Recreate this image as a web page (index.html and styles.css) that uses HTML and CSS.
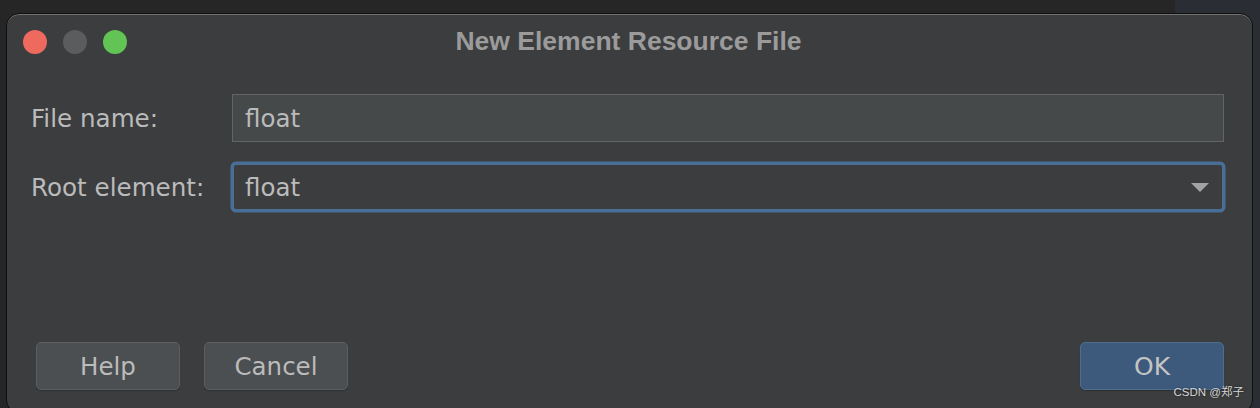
FILE: index.html
```html
<!DOCTYPE html>
<html>
<head>
<meta charset="utf-8">
<link rel="stylesheet" href="styles.css">
</head>
<body>
<div class="window">
  <div class="titlebar">
    <div class="lights">
      <span class="light red"></span>
      <span class="light gray"></span>
      <span class="light green"></span>
    </div>
    <div class="title">New Element Resource File</div>
  </div>
  <div class="form">
    <label class="label">File name:</label>
    <div class="field">float</div>
    <label class="label">Root element:</label>
    <div class="combo">
      <span>float</span>
      <svg class="arrow" width="18" height="10" viewBox="0 0 18 10"><path d="M0 0 H18 L9 9 Z" fill="#a3a3a3"/></svg>
    </div>
  </div>
  <div class="buttons">
    <button class="btn">Help</button>
    <button class="btn">Cancel</button>
    <span class="spacer"></span>
    <button class="btn primary">OK</button>
  </div>
</div>
<div class="watermark">CSDN @郑子</div>
</body>
</html>
```
FILE: styles.css
```css
html, body {
  margin: 0;
  padding: 0;
}
body {
  width: 1260px;
  height: 408px;
  overflow: hidden;
  background: linear-gradient(to right, #262626 1175px, #2b2d34 1175px);
  font-family: "DejaVu Sans", "Noto Sans", sans-serif;
  position: relative;
}
.window {
  margin: 13px 0 0 6px;
  width: 1247px;
  height: 400px;
  box-sizing: border-box;
  background: #3c3d3f;
  border: 1px solid #0f0f0f;
  border-radius: 13px;
  box-shadow: inset 0 1px 0 #717171;
  display: flex;
  flex-direction: column;
}
.titlebar {
  height: 56px;
  flex: none;
  position: relative;
  display: flex;
  align-items: center;
  justify-content: center;
}
.lights {
  position: absolute;
  left: 16px;
  top: 16px;
  display: flex;
  gap: 16px;
}
.light {
  width: 24px;
  height: 24px;
  border-radius: 50%;
  display: block;
}
.red { background: #ee6a5f; }
.gray { background: #5b5c5e; }
.green { background: #61c454; }
.title {
  font-family: "Liberation Sans", Arial, sans-serif;
  font-weight: bold;
  font-size: 26.5px;
  color: #9b9b9b;
  margin-left: -2px;
  margin-top: -1px;
}
.form {
  margin-top: 24px;
  padding: 0 28px 0 24px;
  display: grid;
  grid-template-columns: 201px 1fr;
  row-gap: 21px;
  align-items: center;
}
.label {
  font-size: 24.6px;
  color: #bbbbbb;
  margin-top: 1px;
}
.field, .combo {
  height: 48px;
  box-sizing: border-box;
  display: flex;
  align-items: center;
  padding-left: 12px;
  font-size: 24.5px;
  color: #bbbbbb;
}
.field {
  background: #45494a;
  border: 1px solid #626465;
}
.combo {
  background: #3c3d3f;
  border: 2px solid #4a6f97;
  box-shadow: 0 0 0 1.5px #4a6f97;
  border-radius: 4px;
  justify-content: space-between;
  padding-left: 11px;
  padding-right: 13px;
}
.arrow {
  display: block;
  margin-top: 1px;
}
.buttons {
  margin-top: auto;
  margin-bottom: 22px;
  padding: 0 28px 0 29px;
  display: flex;
  gap: 24px;
  align-items: center;
}
.spacer { flex: 1; }
.btn {
  width: 144px;
  height: 48px;
  box-sizing: border-box;
  background: #4b4f51;
  border: 1px solid #5d6062;
  border-radius: 5px;
  color: #bbbbbb;
  font-family: "DejaVu Sans", sans-serif;
  font-size: 24.5px;
  padding: 0;
  box-shadow: 0 1px 1px rgba(0,0,0,0.25);
}
.btn.primary {
  background: #3d5a7d;
  border-color: #4d6e8c;
  color: #c4c4c4;
  font-size: 25px;
}
.watermark {
  position: absolute;
  right: 16px;
  bottom: 9px;
  font-family: "Liberation Sans", "Noto Sans CJK SC", sans-serif;
  font-size: 11.5px;
  color: #d8d8d8;
  text-shadow: 0 0 2px rgba(0,0,0,0.6);
}
```
